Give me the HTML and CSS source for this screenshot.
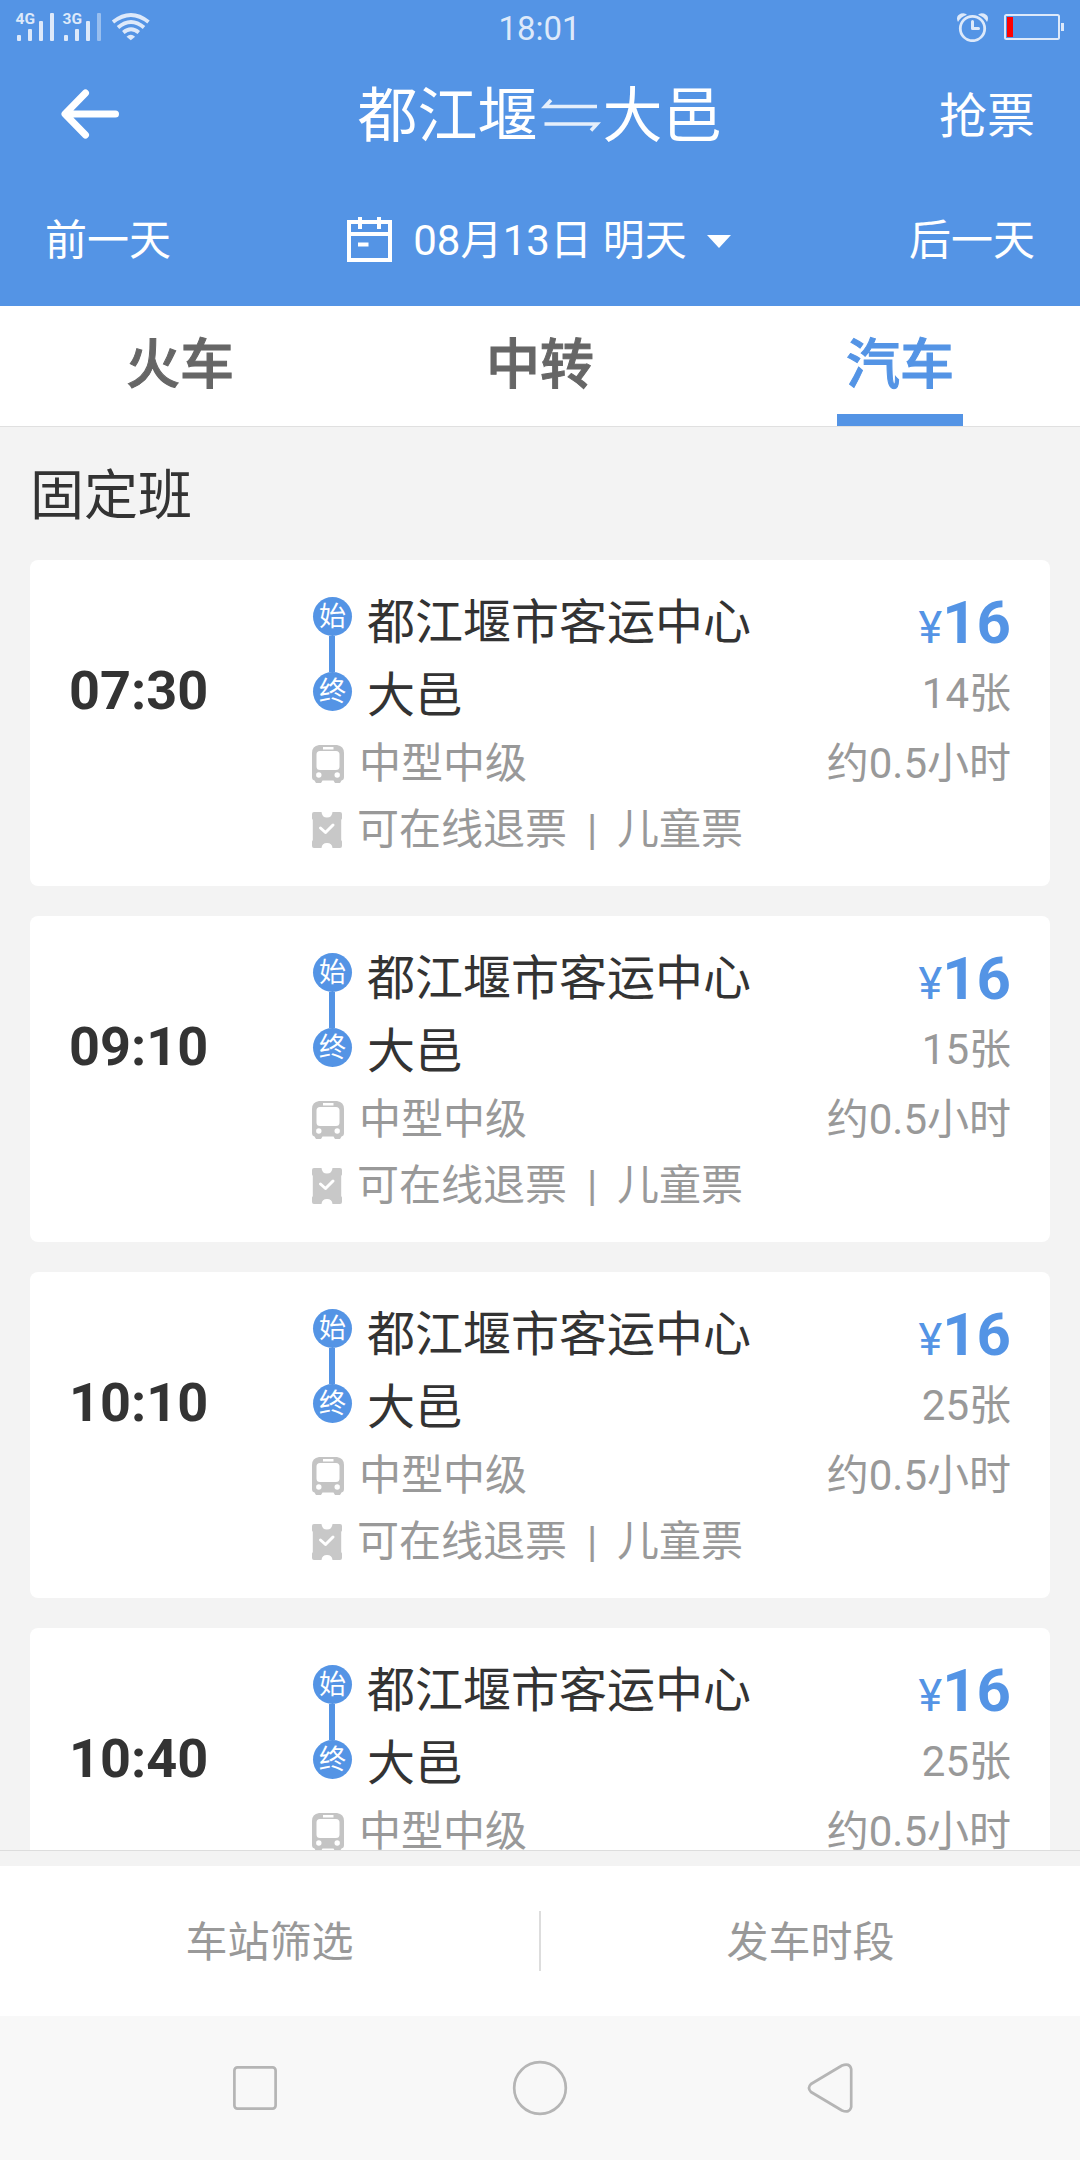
FILE: index.html
```
<!DOCTYPE html>
<html lang="zh-CN">

<head>
    <meta charset="UTF-8">
    <title>都江堰 - 大邑 汽车票</title>
    <link rel="stylesheet" href="styles.css">
</head>

<body>
    <!-- 公用图标 -->
    <svg class="icon-defs" width="0" height="0">
        <symbol id="icon-bus" viewBox="0 0 32 38">
            <path fill="#c4c4c4" fill-rule="evenodd" d="M7 0h18q7 1 7 8v24q0 3-2.500 3.500l-1.500 2.500h-5l-1.500-2.500h-11l-1.500 2.500h-5l-1.500-2.500q-2.500-.5-2.500-3.500v-24q0-7 7-8zM8 6q-3.500 0-3.500 3.500v12q0 3.500 3.500 3.500h16q3.500 0 3.500-3.500v-12q0-3.500-3.500-3.500zM11 2v2.500h10.500v-2.500z" />
            <circle cx="6.800" cy="30" r="2.700" fill="#fff" />
            <circle cx="25.200" cy="30" r="2.700" fill="#fff" />
        </symbol>
        <symbol id="icon-ticket" viewBox="0 0 30 36">
            <path fill="#c8c8c8" d="M2 0h7.500q.5 5.500 5.500 5.500t5.500-5.500h7.500q2 0 2 2v4.500l-.8 1.500v20l.8 1.500v4.500q0 2-2 2h-7.500q-.5-5-5.500-5t-5.500 5h-7.500q-2 0-2-2v-4.500l.8-1.500v-20l-.8-1.500v-4.500q0-2 2-2z" />
            <path fill="none" stroke="#fff" stroke-width="3" stroke-linecap="round" stroke-linejoin="round" d="M8.500 16l5 4.500 7.500-7.500" />
        </symbol>
    </svg>

    <div class="header">
        <div class="status-bar">
            <svg class="status-left" width="150" height="42" viewBox="0 0 150 42" fill="#dde9fa">
                <text class="net-label" x="15.500" y="24">4G</text>
                <rect x="17" y="35" width="4" height="6" rx="1" />
                <rect x="28" y="29" width="4" height="12" rx="1" />
                <rect x="39" y="21" width="4" height="20" rx="1" />
                <rect x="50" y="13" width="4" height="28" rx="1" />
                <text class="net-label" x="62.500" y="24">3G</text>
                <rect x="64" y="35" width="4" height="6" rx="1" />
                <rect x="75" y="29" width="4" height="12" rx="1" />
                <rect x="86" y="21" width="4" height="20" rx="1" />
                <rect x="97" y="13" width="4" height="28" rx="1" opacity=".5" />
                <g fill="none" stroke="#dde9fa" stroke-width="3.800">
                    <path d="M113 22q18-14 35.500 0" />
                    <path d="M118 27.500q13-11 26 0" />
                    <path d="M123.300 32.500q7.700-6.500 15.500 0" />
                </g>
                <path d="M126.500 36.800q4.300-4 8.600 0l-4.300 3.400z" />
            </svg>
            <span class="clock">18:01</span>
            <svg class="status-right" width="108" height="42" viewBox="0 0 108 42" fill="none" stroke="#dde9fa">
                <circle cx="16.500" cy="28.500" r="12.200" stroke-width="2.800" />
                <path stroke-width="3" stroke-linecap="round" stroke-linejoin="round" d="M16.500 21.500v7h6" />
                <path fill="#dde9fa" stroke="none" d="M2 22q-3-6 3-8.500 4-1 6 1.200-6 2-9 7.300zM31 22q3-6-3-8.500-4-1-6 1.200 6 2 9 7.300z" />
                <rect x="49" y="15" width="54" height="24" rx="1.500" stroke-width="2" />
                <rect x="51" y="17" width="6" height="20" fill="#f00" stroke="none" />
                <rect x="105" y="23" width="3" height="8" fill="#dde9fa" stroke="none" />
            </svg>
        </div>
        <div class="title-bar">
            <svg class="back" width="58" height="50" viewBox="0 0 58 50" fill="none" stroke="#fff" stroke-width="7" stroke-linecap="round" stroke-linejoin="round">
                <path d="M54.500 25h-50M24.500 4l-20.500 21 20.500 21" />
            </svg>
            <div class="title">
                <span>都江堰</span>
                <svg width="65" height="36" viewBox="0 0 65 36" fill="none" stroke="#e6effb" stroke-width="3.500">
                    <path d="M59 9.500h-52l6-6.500M6.500 27h52.500l-6 6.500" />
                </svg>
                <span>大邑</span>
            </div>
            <div class="grab">抢票</div>
        </div>
        <div class="date-bar">
            <span class="prev-day">前一天</span>
            <div class="date">
                <svg width="45" height="45" viewBox="0 0 45 45">
                    <path fill="none" stroke="#fff" stroke-width="4" d="M2 5h41v38h-41zM2 17h41M13 0v12M32 0v12M11 27.500h10.500" />
                </svg>
                <span class="date-text">08月13日 明天</span>
                <svg width="24" height="13" viewBox="0 0 24 13">
                    <path fill="#fff" d="M0 0h24l-12 13z" />
                </svg>
            </div>
            <span class="next-day">后一天</span>
        </div>
    </div>

    <div class="tabs">
        <div class="tab">火车</div>
        <div class="tab">中转</div>
        <div class="tab active">汽车</div>
    </div>

    <div class="list">
        <div class="list-title">固定班</div>

        <div class="card">
            <div class="time">07:30</div>
            <div class="detail">
                <div class="route">
                    <div class="badges"><i>始</i><b></b><i>终</i></div>
                    <div class="stations">
                        <div>都江堰市客运中心</div>
                        <div>大邑</div>
                    </div>
                </div>
                <div class="bus"><svg width="32" height="38"><use href="#icon-bus" /></svg>中型中级</div>
                <div class="tips"><svg width="30" height="36"><use href="#icon-ticket" /></svg>可在线退票<em>|</em>儿童票</div>
            </div>
            <div class="fare">
                <div class="price"><small>¥</small>16</div>
                <div class="left">14张</div>
                <div class="duration">约0.5小时</div>
            </div>
        </div>

        <div class="card">
            <div class="time">09:10</div>
            <div class="detail">
                <div class="route">
                    <div class="badges"><i>始</i><b></b><i>终</i></div>
                    <div class="stations">
                        <div>都江堰市客运中心</div>
                        <div>大邑</div>
                    </div>
                </div>
                <div class="bus"><svg width="32" height="38"><use href="#icon-bus" /></svg>中型中级</div>
                <div class="tips"><svg width="30" height="36"><use href="#icon-ticket" /></svg>可在线退票<em>|</em>儿童票</div>
            </div>
            <div class="fare">
                <div class="price"><small>¥</small>16</div>
                <div class="left">15张</div>
                <div class="duration">约0.5小时</div>
            </div>
        </div>

        <div class="card">
            <div class="time">10:10</div>
            <div class="detail">
                <div class="route">
                    <div class="badges"><i>始</i><b></b><i>终</i></div>
                    <div class="stations">
                        <div>都江堰市客运中心</div>
                        <div>大邑</div>
                    </div>
                </div>
                <div class="bus"><svg width="32" height="38"><use href="#icon-bus" /></svg>中型中级</div>
                <div class="tips"><svg width="30" height="36"><use href="#icon-ticket" /></svg>可在线退票<em>|</em>儿童票</div>
            </div>
            <div class="fare">
                <div class="price"><small>¥</small>16</div>
                <div class="left">25张</div>
                <div class="duration">约0.5小时</div>
            </div>
        </div>

        <div class="card">
            <div class="time">10:40</div>
            <div class="detail">
                <div class="route">
                    <div class="badges"><i>始</i><b></b><i>终</i></div>
                    <div class="stations">
                        <div>都江堰市客运中心</div>
                        <div>大邑</div>
                    </div>
                </div>
                <div class="bus"><svg width="32" height="38"><use href="#icon-bus" /></svg>中型中级</div>
            </div>
            <div class="fare">
                <div class="price"><small>¥</small>16</div>
                <div class="left">25张</div>
                <div class="duration">约0.5小时</div>
            </div>
        </div>
    </div>

    <div class="filter-bar">
        <div class="filter">车站筛选</div>
        <div class="divider"></div>
        <div class="filter">发车时段</div>
    </div>

    <div class="nav-bar">
        <svg width="620" height="56" viewBox="0 0 620 56" fill="none" stroke="#b5b5b5" stroke-width="2.700">
            <rect x="1.400" y="7.400" width="41.200" height="41.200" rx="3" />
            <circle cx="307" cy="28" r="25.800" />
            <path stroke-linejoin="round" d="M578 24l31-18.500q7.500-3 9.200 3.500v38q-1.700 6.500-9.200 3.500l-31-18.500q-4-4 0-8z" />
        </svg>
    </div>
</body>

</html>
```
FILE: styles.css
```
* {
    box-sizing: border-box;
}

body {
    margin: 0;
    width: 1080px;
    height: 2160px;
    display: flex;
    flex-direction: column;
    overflow: hidden;
    background: #f3f3f3;
    color: #333;
    font-family: Roboto, "Noto Sans CJK SC", sans-serif;
    font-size: 42px;
}

svg {
    display: block;
    flex: none;
}

.icon-defs {
    position: absolute;
}

/* 头部 */
.header {
    flex: none;
    height: 306px;
    background: #5494e5;
    color: #fff;
}

.status-bar {
    display: grid;
    grid-template-columns: 1fr auto 1fr;
    height: 57px;
    padding-right: 16px;
}

.net-label {
    font: bold 15.500px Roboto, sans-serif;
}

.clock {
    padding-left: 15px;
    line-height: 57px;
    font-size: 33px;
    color: #dde9fa;
}

.status-right {
    justify-self: end;
}

.title-bar {
    display: grid;
    grid-template-columns: 1fr auto 1fr;
    align-items: center;
    height: 119px;
    padding: 0 45px 0 61px;
}

.back {
    margin-top: -5px;
}

.title {
    display: flex;
    align-items: center;
    margin-right: 16px;
    font-size: 60px;
    line-height: 119px;
}

.title svg {
    margin-top: -4px;
}

.grab {
    justify-self: end;
    font-size: 48px;
    line-height: 117px;
}

.date-bar {
    display: flex;
    justify-content: space-between;
    align-items: center;
    height: 130px;
    padding: 0 45px;
    line-height: 132px;
}

.date {
    display: flex;
    align-items: center;
    margin-right: 2px;
}

.date svg:first-child {
    margin-top: -3px;
}

.date-text {
    margin: 0 20px 0 21px;
    letter-spacing: 0.1px;
}

/* 标签 */
.tabs {
    flex: none;
    display: grid;
    grid-template-columns: repeat(3, 1fr);
    height: 121px;
    background: #fff;
    border-bottom: 1px solid #e0e0e0;
}

.tab {
    display: flex;
    flex-direction: column;
    align-items: center;
    font-size: 54px;
    font-weight: 500;
    line-height: 120px;
    color: #666;
    -webkit-text-stroke: 1px currentColor;
}

.tab.active {
    color: #5494e5;
}

.tab.active::after {
    content: "";
    width: 126px;
    height: 12px;
    margin-top: -12px;
    background: #5494e5;
}

/* 班次列表 */
.list {
    flex: none;
    height: 1424px;
    padding: 0 30px;
    overflow: hidden;
    border-bottom: 1px solid #ddd;
}

.list-title {
    height: 133px;
    font-size: 54px;
    line-height: 139px;
}

.card {
    display: flex;
    height: 326px;
    margin-bottom: 30px;
    padding: 26px 39px 0 39px;
    border-radius: 8px;
    background: #fff;
}

.time {
    width: 243px;
    font-size: 54px;
    font-weight: bold;
    line-height: 210px;
}

.detail {
    flex: 1;
    color: #999;
}

.route {
    display: flex;
    height: 144px;
    color: #333;
    font-size: 48px;
    line-height: 73px;
}

.badges {
    display: flex;
    flex-direction: column;
    align-items: flex-start;
    width: 39px;
    margin: 11px 15px 0 1px;
}

.badges i {
    width: 39px;
    height: 39px;
    border-radius: 50%;
    background: #5494e5;
    color: #fff;
    font-size: 27px;
    font-style: normal;
    line-height: 40px;
    text-align: center;
}

.badges b {
    width: 6px;
    height: 36px;
    margin-left: 16px;
    background: #5494e5;
}

.bus,
.tips {
    display: flex;
    align-items: center;
    height: 68px;
    line-height: 68px;
}

.bus svg {
    margin-right: 15px;
}

.tips {
    height: 64px;
    line-height: 64px;
}

.tips svg {
    margin-right: 15px;
}

.tips em {
    width: 50px;
    font-style: normal;
    text-align: center;
}

.fare {
    color: #999;
    text-align: right;
    line-height: 72px;
}

.price {
    height: 72px;
    color: #5494e5;
    font-size: 60px;
    font-weight: bold;
    line-height: 74px;
    white-space: nowrap;
}

.price small {
    font-size: 45px;
    font-weight: normal;
}

.duration {
    line-height: 68px;
}

/* 底部筛选 */
.filter-bar {
    flex: none;
    display: flex;
    align-items: center;
    height: 150px;
    margin-top: 15px;
    background: #fff;
    color: #999;
}

.filter {
    flex: 1;
    padding-top: 3px;
    line-height: 154px;
    text-align: center;
}

.divider {
    width: 2px;
    height: 60px;
    background: #ddd;
}

/* 系统导航 */
.nav-bar {
    flex: none;
    height: 144px;
    padding: 44px 0 0 233px;
    background: #f8f8f8;
}
```
